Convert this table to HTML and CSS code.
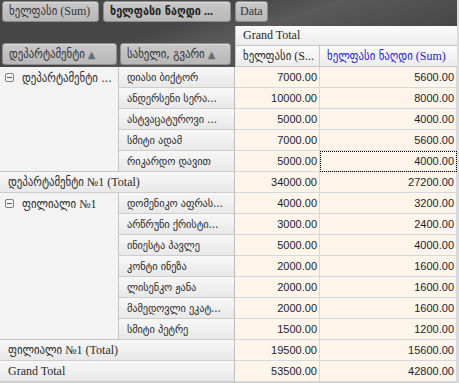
FILE: index.html
```html
<!DOCTYPE html>
<html>
<head>
<meta charset="utf-8">
<link rel="stylesheet" href="styles.css">
</head>
<body>
<div class="pivot">
  <div class="filter-bar">
    <span class="field f1"><span class="ka">ხელფასი</span> (Sum)</span>
    <span class="field f2 bold"><span class="ka">ხელფასი ნაღდი</span> ...</span>
    <span class="field f3">Data</span>
  </div>
  <div class="row-fields">
    <span class="field rf1"><span class="ka">დეპარტამენტი</span> <i class="sort">▲</i></span>
    <span class="field rf2"><span class="ka">სახელი, გვარი</span> <i class="sort">▲</i></span>
  </div>
  <div class="col-head gt-head">Grand Total</div>
  <div class="col-head v1"><span class="ka">ხელფასი</span> (S...</div>
  <div class="col-head v2"><span class="ka">ხელფასი ნაღდი</span> (Sum)</div>

  <div class="group g5"><svg class="toggle" width="9" height="9" viewBox="0 0 9 9"><rect x="0.5" y="0.5" width="8" height="8" rx="1.5" fill="#f4f4f4" stroke="#7d7d7d"/><path d="M2 4.5h5" stroke="#555" stroke-width="1"/></svg><span class="ka">დეპარტამენტი ...</span></div>
  <div class="name ka">დიასი ბიქტორ</div><div class="num">7000.00</div><div class="num">5600.00</div>
  <div class="name ka">ანდერსენი სერა...</div><div class="num">10000.00</div><div class="num">8000.00</div>
  <div class="name ka">ასტვაცატუროვი ...</div><div class="num">5000.00</div><div class="num">4000.00</div>
  <div class="name ka">სმიტი ადამ</div><div class="num">7000.00</div><div class="num">5600.00</div>
  <div class="name ka">რიკარდო დავით</div><div class="num">5000.00</div><div class="num focus">4000.00</div>
  <div class="total"><span class="ka">დეპარტამენტი</span> №1 (Total)</div><div class="num">34000.00</div><div class="num">27200.00</div>

  <div class="group g7"><svg class="toggle" width="9" height="9" viewBox="0 0 9 9"><rect x="0.5" y="0.5" width="8" height="8" rx="1.5" fill="#f4f4f4" stroke="#7d7d7d"/><path d="M2 4.5h5" stroke="#555" stroke-width="1"/></svg><span><span class="ka">ფილიალი</span> №1</span></div>
  <div class="name ka">დომენიკო აფრას...</div><div class="num">4000.00</div><div class="num">3200.00</div>
  <div class="name ka">არწრუნი ქრისტი...</div><div class="num">3000.00</div><div class="num">2400.00</div>
  <div class="name ka">ინიესტა პავლე</div><div class="num">5000.00</div><div class="num">4000.00</div>
  <div class="name ka">კონტი ინეზა</div><div class="num">2000.00</div><div class="num">1600.00</div>
  <div class="name ka">ლისენკო ჟანა</div><div class="num">2000.00</div><div class="num">1600.00</div>
  <div class="name ka">მამედოვლი ეკატ...</div><div class="num">2000.00</div><div class="num">1600.00</div>
  <div class="name ka">სმიტი პეტრე</div><div class="num">1500.00</div><div class="num">1200.00</div>
  <div class="total"><span class="ka">ფილიალი</span> №1 (Total)</div><div class="num">19500.00</div><div class="num">15600.00</div>
  <div class="total">Grand Total</div><div class="num">53500.00</div><div class="num">42800.00</div>
</div>
</body>
</html>
```
FILE: styles.css
```css
* { box-sizing: border-box; margin: 0; padding: 0; }
body {
  margin: 0;
  background: #fff;
  font-family: "Liberation Serif", "DejaVu Serif", serif;
  font-size: 12px;
  color: #2a2a2a;
}
.ka {
  font-family: "DejaVu Sans Condensed", "DejaVu Sans", sans-serif;
  font-size: 12px;
  color: #2a2a2a;
}
.pivot {
  display: grid;
  grid-template-columns: 119px 116px 85px 137px;
  grid-template-rows: 26px 20px 21px repeat(15, 21px);
  width: 459px;
  border-right: 2px solid #dcdcdc;
  border-bottom: 1px solid #d0d0d0;
  background-color: #474747;
  background-image: linear-gradient(162deg, rgba(255,255,255,0) 38%, rgba(255,255,255,0.10) 52%, rgba(255,255,255,0.04) 70%, rgba(255,255,255,0) 80%);
  background-size: 100% 67px;
  background-repeat: no-repeat;
}
.filter-bar {
  grid-column: 1 / -1;
  grid-row: 1;
  display: flex;
  gap: 4px;
  padding: 1px 2px 0;
  align-items: flex-start;
}
.field {
  display: block;
  height: 21px;
  padding: 0 6px;
  line-height: 19px;
  border: 1px solid #8c8c8c;
  border-radius: 3px;
  background: linear-gradient(#c9c9c9, #b8b8b8);
  box-shadow: inset 0 1px 0 rgba(255,255,255,0.35);
  color: #333;
  white-space: nowrap;
  overflow: hidden;
}
.field .ka { color: #333; }
.f1 { width: 97px; }
.f2 { width: 128px; }
.f3 { width: 33px; padding: 0 4px; }
.bold { font-weight: bold; color: #222; }
.bold .ka { color: #222; }
.row-fields {
  grid-column: 1 / 3;
  grid-row: 2 / 4;
  display: flex;
  align-items: flex-end;
  gap: 3px;
  padding: 0 0 2px 2px;
}
.rf1 { width: 115px; height: 22px; line-height: 20px; }
.rf2 { width: 111px; height: 22px; line-height: 20px; }
.sort { font-style: normal; font-family: "DejaVu Sans", sans-serif; font-size: 10px; color: #6f6f6f; }
.col-head {
  background: linear-gradient(#fbfbfb, #ececec);
  border-bottom: 1px solid #c6c6c6;
  padding-left: 7px;
  line-height: 19px;
  white-space: nowrap;
  overflow: hidden;
}
.gt-head { grid-column: 3 / 5; grid-row: 2; border-left: 1px solid #c6c6c6; }
.v1 { grid-column: 3; grid-row: 3; border-right: 1px solid #c6c6c6; border-left: 1px solid #c6c6c6; line-height: 20px; }
.v2 { grid-column: 4; grid-row: 3; color: #1a1aee; line-height: 20px; }
.v2 .ka { color: #1a1aee; }
.group {
  background: #f3f3f3;
  border-right: 1px solid #c4c4c4;
  border-bottom: 1px solid #c4c4c4;
  display: flex;
  align-items: flex-start;
  gap: 8px;
  padding: 2px 0 0 5px;
  line-height: 18px;
  white-space: nowrap;
  overflow: hidden;
}
.toggle { margin-top: 4px; flex: none; }
.g5 { grid-row: span 5; }
.g7 { grid-row: span 7; }
.name, .total {
  background: linear-gradient(#f7f7f7, #e8e8e8);
  border-right: 1px solid #bdbdbd;
  border-bottom: 1px solid #cdcdcd;
  padding-left: 8px;
  line-height: 20px;
  white-space: nowrap;
  overflow: hidden;
}
.name.ka { font-size: 11.5px; letter-spacing: -0.1px; }
.total { grid-column: span 2; }
.num {
  background: #fdf5ea;
  border-right: 1px solid #d3d9e3;
  border-bottom: 1px solid #d3d9e3;
  text-align: right;
  padding-right: 2px;
  font-family: "Liberation Sans", Arial, sans-serif;
  font-size: 11px;
  line-height: 20px;
  color: #1c1c2e;
}
.focus { outline: 1px dotted #000; outline-offset: -1px; }
```
